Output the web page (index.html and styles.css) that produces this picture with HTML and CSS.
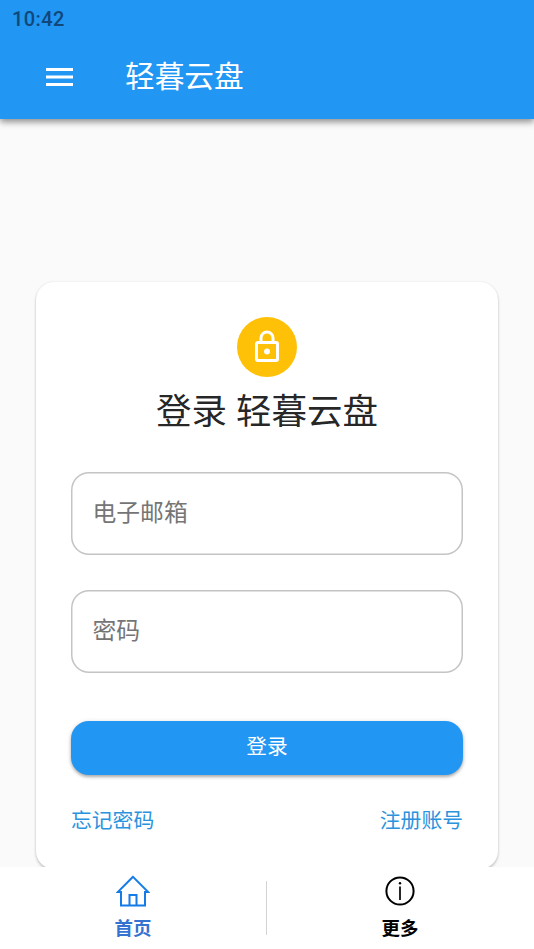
FILE: index.html
```html
<!DOCTYPE html>
<html lang="zh-CN">
<head>
<meta charset="utf-8">
<meta name="viewport" content="width=device-width">
<title>轻暮云盘</title>
<link rel="stylesheet" href="styles.css">
</head>
<body>
<header class="appbar">
  <div class="status">10:42</div>
  <div class="toolbar">
    <svg class="menu" viewBox="0 0 27 18"><path d="M0 0h27v3H0zM0 7.500h27v3H0zM0 15h27v3H0z"/></svg>
    <h1 class="title">轻暮云盘</h1>
  </div>
</header>
<main class="content">
  <form class="card">
    <div class="avatar">
      <svg viewBox="0 0 24 24"><path d="M12 17a2 2 0 0 1-2-2c0-1.110.89-2 2-2a2 2 0 0 1 2 2 2 2 0 0 1-2 2m6 3V10H6v10h12m0-12a2 2 0 0 1 2 2v10a2 2 0 0 1-2 2H6a2 2 0 0 1-2-2V10c0-1.110.89-2 2-2h1V6a5 5 0 0 1 10 0v2h1m-6-5a3 3 0 0 0-3 3v2h6V6a3 3 0 0 0-3-3z"/></svg>
    </div>
    <h2 class="heading">登录 轻暮云盘</h2>
    <div class="field">电子邮箱</div>
    <div class="field">密码</div>
    <div class="submit">登录</div>
    <div class="links"><span>忘记密码</span><span>注册账号</span></div>
  </form>
</main>
<nav class="tabs">
  <div class="tab active">
    <svg class="tab-icon" viewBox="0 0 34 34"><path d="M17 2.800 1.800 18H5v13.500h24V18h3.200zM13.500 31.500V21h7v10.500"/></svg>
    <span>首页</span>
  </div>
  <div class="tab">
    <svg class="tab-icon" viewBox="0 0 34 34"><circle cx="17" cy="17" r="13.600"/><path class="stem" d="M17 12.500v13.500"/><circle class="dot" cx="17" cy="9.200" r="1.200"/></svg>
    <span>更多</span>
  </div>
</nav>
</body>
</html>
```
FILE: styles.css
```css
* { box-sizing: border-box; }
body {
  margin: 0;
  height: 949px;
  display: flex;
  flex-direction: column;
  overflow: hidden;
  background: #fafafa;
  font-family: Roboto, "Noto Sans CJK SC", sans-serif;
}
.appbar {
  flex: none;
  height: 119px;
  background: #2196f3;
  box-shadow: 0 3px 6px rgba(0,0,0,.35), 0 1px 10px rgba(0,0,0,.15);
}
.status {
  height: 36px;
  padding: 0 12px;
  line-height: 38px;
  font-size: 20px;
  font-weight: 500;
  letter-spacing: .4px;
  color: #10487a;
}
.toolbar {
  display: flex;
  align-items: center;
  height: 82px;
  padding-left: 46px;
}
.menu { width: 27px; height: 18px; fill: #fff; }
.title {
  margin: 0 0 0 52px;
  font-size: 29.700px;
  font-weight: 400;
  line-height: 44px;
  color: #fff;
}
.content {
  flex: 1;
  min-height: 0;
  padding: 163px 36px 0;
  overflow: hidden;
}
.card {
  height: 587px;
  padding: 35px 35px 0;
  border-radius: 18px;
  background: #fff;
  box-shadow: 0 2px 3px rgba(0,0,0,.2), 0 0 2px rgba(0,0,0,.1);
}
.avatar {
  display: grid;
  place-items: center;
  width: 60px;
  height: 60px;
  margin: 0 auto;
  border-radius: 50%;
  background: #ffc107;
}
.avatar svg { width: 36px; height: 36px; fill: #fff; }
.heading {
  margin: 9px 0 33px;
  text-align: center;
  font-size: 35.500px;
  font-weight: 400;
  line-height: 53px;
  color: rgba(0,0,0,.87);
}
.field {
  height: 83px;
  margin-bottom: 35px;
  padding-left: 21.500px;
  border-radius: 18px;
  box-shadow: inset 0 0 0 1.500px #c4c4c4;
  font-size: 23.800px;
  line-height: 82px;
  color: #757575;
}
.submit {
  height: 54px;
  margin-top: 48px;
  border-radius: 18px;
  background: #2196f3;
  box-shadow: 0 2px 3px rgba(0,0,0,.25), 0 1px 5px rgba(0,0,0,.15);
  text-align: center;
  font-size: 20.700px;
  line-height: 52px;
  color: #fff;
}
.links {
  display: flex;
  justify-content: space-between;
  margin-top: 30px;
  font-size: 20.800px;
  line-height: 32px;
  color: #2b93de;
}
.tabs {
  flex: none;
  display: flex;
  height: 82px;
  background: #fff;
}
.tab {
  flex: 1;
  display: flex;
  flex-direction: column;
  align-items: center;
  padding: 7px 1px 0 0;
  font-size: 18.500px;
  font-weight: 700;
  line-height: 26px;
  color: #000;
}
.tab.active {
  color: #3672cf;
  background: linear-gradient(#d4d4d4, #d4d4d4) right center / 1px 54px no-repeat;
}
.tab-icon { width: 34px; height: 34px; margin-bottom: 8px; fill: none; stroke: currentColor; stroke-width: 2; }
.tab.active .tab-icon { color: #157be6; }
.stem { stroke-width: 1.700; }
.dot { fill: currentColor; stroke: none; }
```
